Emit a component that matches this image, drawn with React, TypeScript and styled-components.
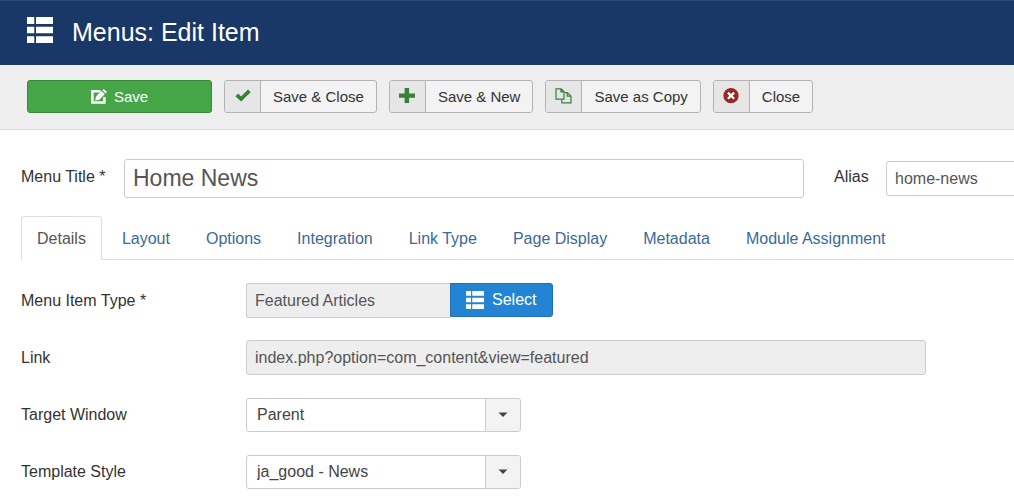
import React from "react";
import styled, { createGlobalStyle } from "styled-components";

const GlobalStyle = createGlobalStyle`
  *, *::before, *::after { box-sizing: border-box; }
  body {
    margin: 0;
    background: #fff;
    color: #333;
    font: 16px/24px "Liberation Sans", Arial, sans-serif;
  }
  button, input, select { font: inherit; margin: 0; }
`;

const Page = styled.div`
  overflow: hidden;
`;

const Header = styled.header`
  display: flex;
  align-items: center;
  gap: 19px;
  height: 65px;
  padding: 0 27px 2px;
  background: #1a3867;
  border-top: 1px solid #2b4a75;
  color: #fff;
`;

const HeaderIcon = styled.span`
  display: flex;
  padding-bottom: 4px;
`;

const PageTitle = styled.h1`
  margin: 0;
  font-size: 25px;
  line-height: 36px;
  font-weight: 400;
`;

const Toolbar = styled.div`
  display: flex;
  flex-wrap: wrap;
  gap: 12px;
  padding: 15px 27px 16px;
  background: #efefef;
  border-bottom: 1px solid #dadada;
`;

const PrimaryButton = styled.button`
  display: flex;
  align-items: center;
  justify-content: center;
  gap: 7px;
  width: 185px;
  height: 33px;
  padding: 0;
  border: 1px solid #3a873a;
  border-radius: 3px;
  background: #46a546;
  color: #fff;
  font-size: 15px;
`;

const SplitButton = styled.button`
  display: flex;
  align-items: stretch;
  height: 33px;
  padding: 0;
  border: 1px solid #b3b3b3;
  border-radius: 3px;
  background: #f3f3f3;
  color: #333;
  font-size: 15px;
  overflow: hidden;
`;

const ButtonIcon = styled.span<{ $color: string }>`
  display: flex;
  align-items: center;
  justify-content: center;
  width: 36px;
  padding-bottom: 2px;
  border-right: 1px solid #b3b3b3;
  background: #e6e6e6;
  color: ${(p) => p.$color};
`;

const ButtonText = styled.span`
  padding: 0 12px;
  line-height: 32px;
`;

const Form = styled.form`
  padding: 29px 0 9px 21px;
`;

const TitleRow = styled.div`
  display: flex;
  align-items: center;
  height: 39px;
  margin: 0 -8px 18px 0;
`;

const TitleLabel = styled.label<{ $width: number }>`
  flex: 0 0 ${(p) => p.$width}px;
  padding-bottom: 4px;
`;

const TextInput = styled.input<{ $large?: boolean }>`
  min-width: 0;
  height: ${(p) => (p.$large ? 39 : 35)}px;
  padding: 0 8px;
  border: 1px solid #ccc;
  border-radius: 3px;
  background: #fff;
  color: #555;
  font-size: ${(p) => (p.$large ? 23 : 16)}px;
  &:read-only { background: #eee; }
`;

const TitleInput = styled(TextInput)`
  flex: 0 1 680px;
  margin-right: 30px;
`;

const AliasInput = styled(TextInput)`
  flex: 1 0 120px;
`;

const TabList = styled.nav`
  display: flex;
  gap: 4px;
  border-bottom: 1px solid #ddd;
`;

const Tab = styled.a<{ $active?: boolean }>`
  height: 44px;
  margin-bottom: -1px;
  padding: 0 15px;
  border: 1px solid ${(p) => (p.$active ? "#ddd" : "transparent")};
  border-bottom-color: ${(p) => (p.$active ? "#fff" : "transparent")};
  border-radius: 4px 4px 0 0;
  color: ${(p) => (p.$active ? "#555" : "#3b6a97")};
  line-height: 43px;
  text-decoration: none;
  white-space: nowrap;
`;

const Fields = styled.div`
  display: grid;
  gap: 22px;
  padding: 23px 21px 0 0;
`;

const Field = styled.div`
  display: flex;
  align-items: center;
  height: 35px;
`;

const FieldLabel = styled.label`
  flex: 0 0 225px;
`;

const TypeInput = styled(TextInput)`
  flex: 0 1 204px;
  border-right: 0;
  border-radius: 3px 0 0 3px;
`;

const LinkInput = styled(TextInput)`
  flex: 0 1 680px;
`;

const SelectButton = styled.button`
  display: flex;
  align-items: center;
  gap: 8px;
  align-self: flex-start;
  height: 34px;
  padding: 0 16px 0 15px;
  border: 1px solid #1f6fb5;
  border-radius: 0 3px 3px 0;
  background: #2384d3;
  color: #fff;
`;

const DropDown = styled.span`
  position: relative;
  flex: 0 1 275px;
  display: flex;
`;

const NativeSelect = styled.select`
  appearance: none;
  width: 100%;
  height: 34px;
  padding: 1px 46px 0 10px;
  border: 1px solid #ccc;
  border-radius: 3px;
  background: #fff;
  color: #444;
`;

const Arrow = styled.span`
  position: absolute;
  inset: 1px 1px 1px auto;
  display: flex;
  align-items: center;
  justify-content: center;
  width: 35px;
  border-left: 1px solid #ccc;
  border-radius: 0 2px 2px 0;
  background: #f3f3f3;
  pointer-events: none;
`;

const ListIcon = ({ size }: { size: number }) => (
  <svg width={size} height={size} viewBox="0 0 26 26" fill="currentColor" aria-hidden="true">
    <path d="M0 0h7.3v7H0zM9 0h17v7H9zM0 9.7h7.3v6.6H0zM9 9.7h17v6.6H9zM0 19.3h7.3V26H0zM9 19.3h17V26H9z" />
  </svg>
);

const EditIcon = () => (
  <svg width="16" height="16" viewBox="0 0 16 16" aria-hidden="true">
    <path d="M9.5 2.2H1.4v11.4h12V8" fill="none" stroke="currentColor" strokeWidth="2.5" />
    <path d="M4.2 11.4l.8-4L10.4 2l3.3 3.3-5.4 5.4zM11.3 1.2L12.8 0 16 3l-1.5 1.6z" fill="currentColor" />
  </svg>
);

const CheckIcon = () => (
  <svg width="16" height="16" viewBox="0 0 16 16" aria-hidden="true">
    <path d="M.4 8.2l2.7-2.8 3 3L13 1.6l2.6 2.6L6.2 13.6z" fill="currentColor" />
  </svg>
);

const PlusIcon = () => (
  <svg width="16" height="16" viewBox="0 0 16 16" aria-hidden="true">
    <path d="M5.6 0h4.5v5.5H16v4.3h-5.9V15H5.6V9.8H0V5.5h5.6z" fill="currentColor" />
  </svg>
);

const CopyIcon = () => (
  <svg width="17" height="16" viewBox="0 0 17 16" fill="none" stroke="currentColor" strokeWidth="1.2" aria-hidden="true">
    <path d="M5.8 11.2H1V.8h5.2L9 3.6v7.6H5.8M6 .8v3h3" />
    <path d="M9.4 4.6h3l3.6 3.6v6.6H6.8v-3.4M12.2 4.8v3.4H16" />
  </svg>
);

const CancelIcon = () => (
  <svg width="16" height="16" viewBox="0 0 16 16" aria-hidden="true">
    <circle cx="8" cy="7.7" r="7.6" fill="currentColor" />
    <path d="M4.9 4.6l6.2 6.2m0-6.2l-6.2 6.2" stroke="#fff" strokeWidth="2.2" />
  </svg>
);

const CaretIcon = () => (
  <svg width="10" height="6" viewBox="0 0 10 6" aria-hidden="true">
    <path d="M.5.5h9L5 5z" fill="#444" />
  </svg>
);

const actions = [
  { text: "Save & Close", color: "#378137", icon: <CheckIcon /> },
  { text: "Save & New", color: "#378137", icon: <PlusIcon /> },
  { text: "Save as Copy", color: "#378137", icon: <CopyIcon /> },
  { text: "Close", color: "#942a25", icon: <CancelIcon /> },
];

const tabs = ["Details", "Layout", "Options", "Integration", "Link Type", "Page Display", "Metadata", "Module Assignment"];

export default function App() {
  return (
    <Page>
      <GlobalStyle />
      <Header>
        <HeaderIcon><ListIcon size={26} /></HeaderIcon>
        <PageTitle>Menus: Edit Item</PageTitle>
      </Header>
      <Toolbar>
        <PrimaryButton type="button"><EditIcon />Save</PrimaryButton>
        {actions.map((a) => (
          <SplitButton type="button" key={a.text}>
            <ButtonIcon $color={a.color}>{a.icon}</ButtonIcon>
            <ButtonText>{a.text}</ButtonText>
          </SplitButton>
        ))}
      </Toolbar>
      <Form>
        <TitleRow>
          <TitleLabel htmlFor="title" $width={103}>Menu Title *</TitleLabel>
          <TitleInput id="title" $large defaultValue="Home News" />
          <TitleLabel htmlFor="alias" $width={52}>Alias</TitleLabel>
          <AliasInput id="alias" defaultValue="home-news" />
        </TitleRow>
        <TabList>
          {tabs.map((t, i) => (
            <Tab href="#" key={t} $active={i === 0}>{t}</Tab>
          ))}
        </TabList>
        <Fields>
          <Field>
            <FieldLabel htmlFor="type">Menu Item Type *</FieldLabel>
            <TypeInput id="type" readOnly defaultValue="Featured Articles" />
            <SelectButton type="button"><ListIcon size={18} />Select</SelectButton>
          </Field>
          <Field>
            <FieldLabel htmlFor="link">Link</FieldLabel>
            <LinkInput id="link" readOnly defaultValue="index.php?option=com_content&view=featured" />
          </Field>
          <Field>
            <FieldLabel htmlFor="target">Target Window</FieldLabel>
            <DropDown>
              <NativeSelect id="target"><option>Parent</option></NativeSelect>
              <Arrow><CaretIcon /></Arrow>
            </DropDown>
          </Field>
          <Field>
            <FieldLabel htmlFor="template">Template Style</FieldLabel>
            <DropDown>
              <NativeSelect id="template"><option>ja_good - News</option></NativeSelect>
              <Arrow><CaretIcon /></Arrow>
            </DropDown>
          </Field>
        </Fields>
      </Form>
    </Page>
  );
}
